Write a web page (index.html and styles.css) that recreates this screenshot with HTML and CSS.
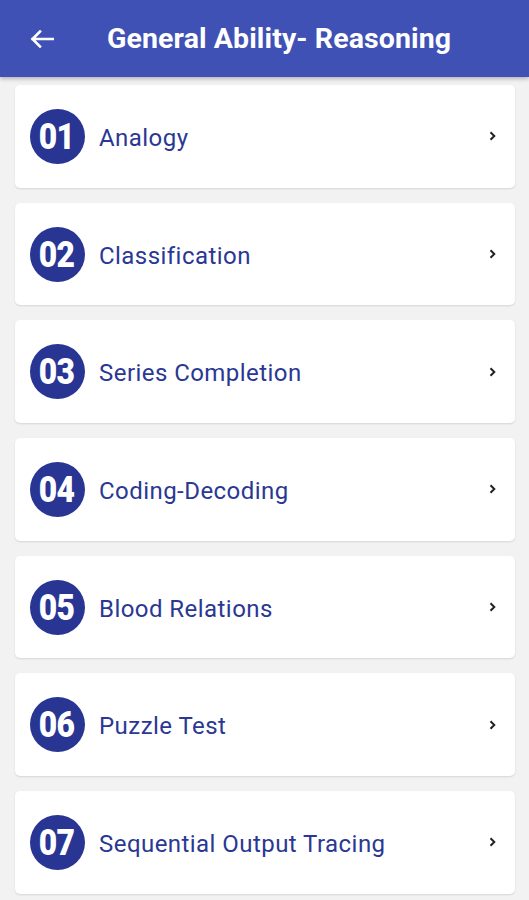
FILE: index.html
```html
<!DOCTYPE html>
<html>
<head>
<meta charset="utf-8">
<link rel="stylesheet" href="styles.css">
</head>
<body>
<header class="appbar">
  <svg class="back" width="24" height="18" viewBox="0 0 24 18"><path d="M23 9H2.5M10 1.5L2.5 9L10 16.5" fill="none" stroke="#fff" stroke-width="2.6" stroke-linecap="square"/></svg>
  <h1 class="title">General Ability- Reasoning</h1>
</header>
<main class="list">
  <div class="card"><span class="num"><span>01</span></span><span class="label">Analogy</span><svg class="chev" width="7" height="10" viewBox="0 0 7 10"><path d="M1.5 1.2L5.3 5L1.5 8.8" fill="none" stroke="#222" stroke-width="2"/></svg></div>
  <div class="card"><span class="num"><span>02</span></span><span class="label">Classification</span><svg class="chev" width="7" height="10" viewBox="0 0 7 10"><path d="M1.5 1.2L5.3 5L1.5 8.8" fill="none" stroke="#222" stroke-width="2"/></svg></div>
  <div class="card"><span class="num"><span>03</span></span><span class="label">Series Completion</span><svg class="chev" width="7" height="10" viewBox="0 0 7 10"><path d="M1.5 1.2L5.3 5L1.5 8.8" fill="none" stroke="#222" stroke-width="2"/></svg></div>
  <div class="card"><span class="num"><span>04</span></span><span class="label">Coding-Decoding</span><svg class="chev" width="7" height="10" viewBox="0 0 7 10"><path d="M1.5 1.2L5.3 5L1.5 8.8" fill="none" stroke="#222" stroke-width="2"/></svg></div>
  <div class="card"><span class="num"><span>05</span></span><span class="label">Blood Relations</span><svg class="chev" width="7" height="10" viewBox="0 0 7 10"><path d="M1.5 1.2L5.3 5L1.5 8.8" fill="none" stroke="#222" stroke-width="2"/></svg></div>
  <div class="card"><span class="num"><span>06</span></span><span class="label">Puzzle Test</span><svg class="chev" width="7" height="10" viewBox="0 0 7 10"><path d="M1.5 1.2L5.3 5L1.5 8.8" fill="none" stroke="#222" stroke-width="2"/></svg></div>
  <div class="card"><span class="num"><span>07</span></span><span class="label">Sequential Output Tracing</span><svg class="chev" width="7" height="10" viewBox="0 0 7 10"><path d="M1.5 1.2L5.3 5L1.5 8.8" fill="none" stroke="#222" stroke-width="2"/></svg></div>
</main>
</body>
</html>
```
FILE: styles.css
```css
html, body { margin: 0; padding: 0; }
body {
  background: #f2f2f2;
  font-family: Roboto, "Noto Sans", sans-serif;
  width: 529px;
  height: 900px;
  overflow: hidden;
}
.appbar {
  height: 77px;
  background: #3f51b5;
  display: flex;
  align-items: center;
  padding-left: 30px;
  box-shadow: 0 2px 4px rgba(0,0,0,0.25);
  position: relative;
  z-index: 1;
}
.back { flex: none; }
.title {
  margin: 0 0 0 53px;
  color: #fff;
  font-size: 28.5px;
  font-weight: 700;
  letter-spacing: 0.1px;
}
.list {
  display: flex;
  flex-direction: column;
  gap: 15px;
  padding: 8px 14px 0 15px;
}
.card {
  height: 102.7px;
  background: #fff;
  border-radius: 5px;
  box-shadow: 0 1px 2px rgba(0,0,0,0.12);
  display: flex;
  align-items: center;
  padding-left: 15px;
  padding-right: 19px;
}
.num {
  width: 55px;
  height: 55px;
  border-radius: 50%;
  background: #283593;
  color: #fff;
  display: flex;
  align-items: center;
  justify-content: center;
  flex: none;
}
.num span {
  font-weight: 900;
  font-size: 37px;
  letter-spacing: -1px;
  transform: scaleX(0.86);
  display: inline-block;
  margin-left: -2px;
  line-height: 1;
}
.label {
  margin-left: 14px;
  margin-top: 3px;
  font-size: 24px;
  color: #2a3894;
  flex: 1;
  letter-spacing: 0.45px;
}
.chev { flex: none; }
```
